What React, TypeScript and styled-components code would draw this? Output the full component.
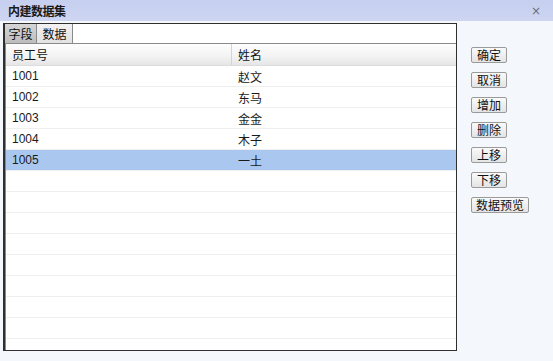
import React from "react";
import styled, { createGlobalStyle } from "styled-components";

const GlobalStyle = createGlobalStyle`
  html, body {
    margin: 0;
    padding: 0;
    background: #f4f7fc;
  }
  body {
    font-family: "Liberation Sans", "Noto Sans CJK SC", sans-serif;
    font-size: 12px;
    color: #111;
  }
`;

interface Row {
  id: string;
  name: string;
}

const rows: Row[] = [
  { id: "1001", name: "赵文" },
  { id: "1002", name: "东马" },
  { id: "1003", name: "金金" },
  { id: "1004", name: "木子" },
  { id: "1005", name: "一土" },
];

const EMPTY_ROWS = 9;
const SELECTED = "1005";

const buttons = ["确定", "取消", "增加", "删除", "上移", "下移", "数据预览"];

const App = () => {
  return (
    <Dialog>
      <GlobalStyle />
      <TitleBar>
        <Title>内建数据集</Title>
        <Close>×</Close>
      </TitleBar>
      <Body>
        <Panel>
          <TabStrip>
            <Tab>字段</Tab>
            <Tab $active>数据</Tab>
          </TabStrip>
          <Grid>
            <HeaderRow>
              <HeaderCell $first>员工号</HeaderCell>
              <HeaderCell>姓名</HeaderCell>
            </HeaderRow>
            {rows.map((r) => (
              <DataRow key={r.id} $selected={r.id === SELECTED}>
                <Cell $first>{r.id}</Cell>
                <Cell>{r.name}</Cell>
              </DataRow>
            ))}
            {Array.from({ length: EMPTY_ROWS }).map((_, i) => (
              <DataRow key={"e" + i} />
            ))}
          </Grid>
        </Panel>
        <ButtonColumn>
          {buttons.map((b) => (
            <Button key={b}>{b}</Button>
          ))}
        </ButtonColumn>
      </Body>
    </Dialog>
  );
};

export default App;

const Dialog = styled.div`
  width: 553px;
  height: 361px;
  background: #f4f7fc;
  display: flex;
  flex-direction: column;
  overflow: hidden;
`;

const TitleBar = styled.div`
  height: 21px;
  flex: 0 0 21px;
  background: linear-gradient(#c6cfef, #cdd5f2);
  display: flex;
  align-items: center;
  justify-content: space-between;
  padding: 0 12px 0 8px;
`;

const Title = styled.span`
  font-family: "Noto Sans CJK SC", sans-serif;
  font-weight: bold;
  font-size: 12px;
  color: #1a1a1a;
  letter-spacing: -0.5px;
`;

const Close = styled.span`
  font-family: "DejaVu Sans", sans-serif;
  font-size: 12px;
  color: #6a6f80;
`;

const Body = styled.div`
  flex: 1;
  display: flex;
  padding: 2px 0 0 3px;
`;

const Panel = styled.div`
  width: 454px;
  height: 328px;
  box-sizing: border-box;
  border: 1px solid #2f2f2f;
  border-left-width: 2px;
  background: #fff;
  display: flex;
  flex-direction: column;
  overflow: hidden;
`;

const TabStrip = styled.div`
  height: 20px;
  flex: 0 0 20px;
  box-sizing: border-box;
  display: flex;
  border-bottom: 1px solid #8a8a8a;
  background: #fff;
`;

const Tab = styled.div<{ $active?: boolean }>`
  font-family: "Noto Sans CJK SC", sans-serif;
  font-size: 12px;
  width: ${({ $active }) => ($active ? "36px" : "32px")};
  display: flex;
  align-items: center;
  justify-content: center;
  box-sizing: border-box;
  border-right: 1px solid #8a8a8a;
  background: ${({ $active }) =>
    $active
      ? "linear-gradient(#f2f2f2, #e2e2e2)"
      : "linear-gradient(#d6d6d6, #bdbdbd)"};
  color: #111;
`;

const Grid = styled.div`
  flex: 1;
  display: flex;
  flex-direction: column;
  border-left: 1px solid #8a8a8a;
`;

const HeaderRow = styled.div`
  height: 22px;
  flex: 0 0 22px;
  display: flex;
  background: linear-gradient(#fdfdfd, #f3f3f3 60%, #e6e6e6);
  border-bottom: 1px solid #dcdcdc;
  box-sizing: border-box;
`;

const HeaderCell = styled.div<{ $first?: boolean }>`
  font-family: "Noto Sans CJK SC", sans-serif;
  font-size: 12px;
  width: ${({ $first }) => ($first ? "226px" : "auto")};
  flex: ${({ $first }) => ($first ? "0 0 226px" : "1")};
  box-sizing: border-box;
  padding-left: 6px;
  display: flex;
  align-items: center;
  border-right: ${({ $first }) => ($first ? "1px solid #d4d4d4" : "none")};
`;

const DataRow = styled.div<{ $selected?: boolean }>`
  height: 21px;
  flex: 0 0 21px;
  box-sizing: border-box;
  display: flex;
  background: ${({ $selected }) => ($selected ? "#a9c7ef" : "#fff")};
  border-bottom: 1px solid #efefef;
`;

const Cell = styled.div<{ $first?: boolean }>`
  font-family: "Liberation Sans", "Noto Sans CJK SC", sans-serif;
  font-size: 12px;
  flex: ${({ $first }) => ($first ? "0 0 226px" : "1")};
  box-sizing: border-box;
  padding-left: 6px;
  display: flex;
  align-items: center;
  color: #1a1a1a;
`;

const ButtonColumn = styled.div`
  display: flex;
  flex-direction: column;
  align-items: flex-start;
  gap: 9px;
  padding: 24px 0 0 14px;
`;

const Button = styled.button`
  font-family: "Noto Sans CJK SC", sans-serif;
  font-size: 12px;
  height: 16px;
  min-width: 36px;
  padding: 0 4px;
  line-height: 14px;
  box-sizing: border-box;
  border: 1px solid #9a9a9a;
  border-radius: 2px;
  background: linear-gradient(#fafafa, #e4e4e4);
  color: #111;
  display: flex;
  align-items: center;
  justify-content: center;
`;
